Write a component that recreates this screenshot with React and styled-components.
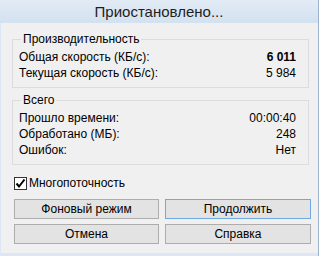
import React from "react";
import styled, { createGlobalStyle } from "styled-components";

const Global = createGlobalStyle`
  html, body { margin: 0; padding: 0; background: #dbe7f4; }
  body { font-family: "Liberation Sans", Arial, sans-serif; font-size: 12px; color: #000; }
  * { box-sizing: border-box; }
`;

function App() {
  return (
    <>
      <Global />
      <Window>
        <TitleBar>Приостановлено...</TitleBar>
        <Client>
          <Group>
            <Legend>Производительность</Legend>
            <Row>
              <span>Общая скорость (КБ/с):</span>
              <Value $bold>6 011</Value>
            </Row>
            <Row>
              <span>Текущая скорость (КБ/с):</span>
              <Value>5 984</Value>
            </Row>
          </Group>
          <Group $second>
            <Legend>Всего</Legend>
            <Row>
              <span>Прошло времени:</span>
              <Value>00:00:40</Value>
            </Row>
            <Row>
              <span>Обработано (МБ):</span>
              <Value>248</Value>
            </Row>
            <Row>
              <span>Ошибок:</span>
              <Value>Нет</Value>
            </Row>
          </Group>
          <CheckLine>
            <Box>
              <svg width="11" height="11" viewBox="0 0 11 11">
                <path d="M1.5 5.5 L4 8.5 L9.5 1.5" fill="none" stroke="#000" strokeWidth="2" />
              </svg>
            </Box>
            Многопоточность
          </CheckLine>
          <Buttons>
            <Button>Фоновый режим</Button>
            <Button $default>Продолжить</Button>
            <Button>Отмена</Button>
            <Button>Справка</Button>
          </Buttons>
        </Client>
      </Window>
    </>
  );
}

export default App;

const Window = styled.div`
  width: 319px;
  height: 256px;
  display: flex;
  flex-direction: column;
  background: #dbe7f4;
  border-right: 1px solid #9db4cc;
  overflow: hidden;
`;

const TitleBar = styled.div`
  height: 23px;
  flex: none;
  display: flex;
  align-items: center;
  justify-content: center;
  font-size: 15px;
  color: #1e1e1e;
  background: linear-gradient(#e2ebf5, #d3e1f0);
  padding-bottom: 1px;
`;

const Client = styled.div`
  margin: 0 0 3px 1px;
  flex: 1;
  background: #f0f0f0;
  padding: 9px 9px 0 11px;
  display: flex;
  flex-direction: column;
`;

const Group = styled.fieldset`
  margin: 0 0 ${(p) => (p.$second ? "4px" : "5px")} 0;
  padding: 3px 12px 6px 6px;
  border: 1px solid #dcdcdc;
  min-width: 0;
`;

const Legend = styled.legend`
  margin-left: 2px;
  padding: 0 2px;
  line-height: 14px;
  color: #000;
`;

const Row = styled.div`
  display: flex;
  justify-content: space-between;
  align-items: center;
  height: 16px;
  white-space: nowrap;
`;

const Value = styled.span`
  font-weight: ${(p) => (p.$bold ? 700 : 400)};
`;

const CheckLine = styled.div`
  display: flex;
  align-items: center;
  gap: 2px;
  height: 16px;
  margin: 6px 0 0 2px;
`;

const Box = styled.span`
  width: 13px;
  height: 13px;
  border: 1px solid #333;
  background: #fff;
  display: flex;
  align-items: center;
  justify-content: center;
`;

const Buttons = styled.div`
  display: grid;
  grid-template-columns: 145px 146px;
  column-gap: 6px;
  row-gap: 5px;
  margin: 8px 0 0 2px;
`;

const Button = styled.div`
  height: 20px;
  display: flex;
  align-items: center;
  justify-content: center;
  border: 1px solid ${(p) => (p.$default ? "#6fa8e2" : "#adadad")};
  background: #e3e3e3;
  color: #000;
`;
